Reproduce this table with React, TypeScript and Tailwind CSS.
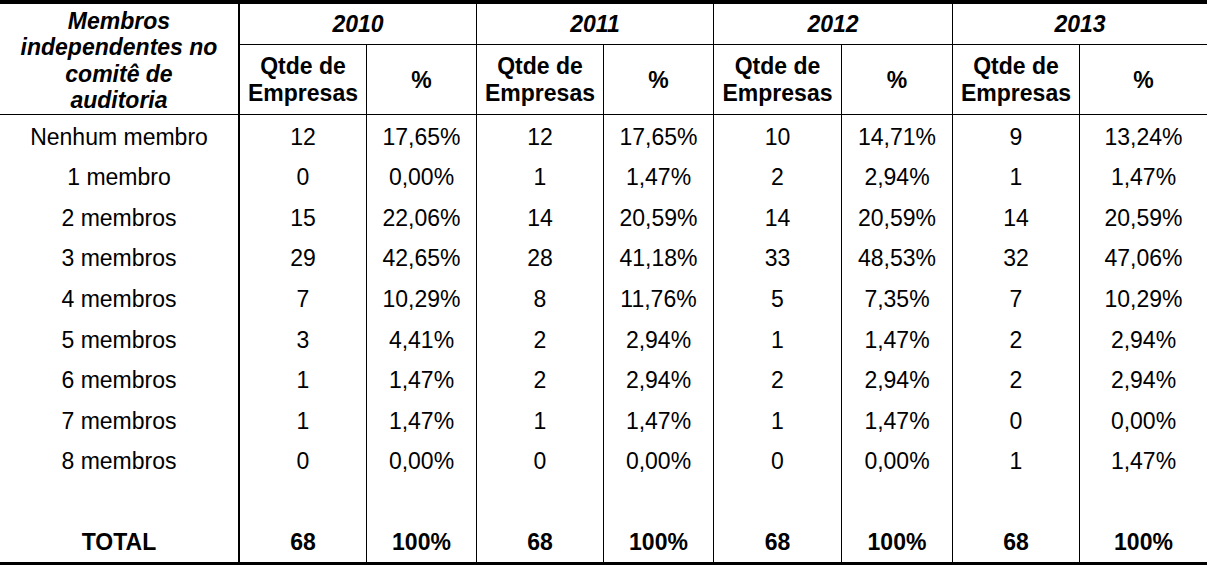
import React from "react";

const years = ["2010", "2011", "2012", "2013"];

const rows: [string, string[]][] = [
  ["Nenhum membro", ["12", "17,65%", "12", "17,65%", "10", "14,71%", "9", "13,24%"]],
  ["1 membro", ["0", "0,00%", "1", "1,47%", "2", "2,94%", "1", "1,47%"]],
  ["2 membros", ["15", "22,06%", "14", "20,59%", "14", "20,59%", "14", "20,59%"]],
  ["3 membros", ["29", "42,65%", "28", "41,18%", "33", "48,53%", "32", "47,06%"]],
  ["4 membros", ["7", "10,29%", "8", "11,76%", "5", "7,35%", "7", "10,29%"]],
  ["5 membros", ["3", "4,41%", "2", "2,94%", "1", "1,47%", "2", "2,94%"]],
  ["6 membros", ["1", "1,47%", "2", "2,94%", "2", "2,94%", "2", "2,94%"]],
  ["7 membros", ["1", "1,47%", "1", "1,47%", "1", "1,47%", "0", "0,00%"]],
  ["8 membros", ["0", "0,00%", "0", "0,00%", "0", "0,00%", "1", "1,47%"]],
];

const cellBorder = (i: number) =>
  i === 7 ? "" : "border-r border-black";

export default function App() {
  return (
    <div
      className="w-[1209px] h-[565px] bg-white text-black overflow-hidden"
      style={{ fontFamily: '"Liberation Sans", Arial, sans-serif' }}
    >
      <div className="w-[1207px] border-t-4 border-b-[3px] border-black">
        <div className="grid grid-cols-[240px_127px_110px_127px_110px_128px_111px_127px_127px] grid-rows-[41px_70px] text-[23px]">
          <div className="row-span-2 col-start-1 row-start-1 border-r-2 border-b border-black flex items-center justify-center text-center font-bold italic leading-[26.5px] pt-[3px]">
            <span>
              Membros
              <br />
              independentes no
              <br />
              comitê de
              <br />
              auditoria
            </span>
          </div>
          {years.map((y, i) => (
            <div
              key={y}
              className={`col-span-2 row-start-1 border-b border-black flex items-center justify-center font-bold italic ${i === 3 ? "" : "border-r"}`}
            >
              {y}
            </div>
          ))}
          {years.map((y, i) => (
            <React.Fragment key={"s" + y}>
              <div className="row-start-2 border-r border-b border-black flex items-center justify-center text-center font-bold leading-[27px] pt-[1px]">
                <span>
                  Qtde de
                  <br />
                  Empresas
                </span>
              </div>
              <div
                className={`row-start-2 border-b border-black flex items-center justify-center font-bold pt-[1px] ${i === 3 ? "" : "border-r"}`}
              >
                %
              </div>
            </React.Fragment>
          ))}
        </div>
        <div className="grid grid-cols-[240px_127px_110px_127px_110px_128px_111px_127px_127px] auto-rows-[40.6px] text-[23px]">
          {rows.map(([label, vals]) => (
            <React.Fragment key={label}>
              <div className="border-r-2 border-black flex items-center justify-center pt-[3px]">
                {label}
              </div>
              {vals.map((v, i) => (
                <div
                  key={i}
                  className={`${cellBorder(i)} flex items-center justify-center pt-[3px]`}
                >
                  {v}
                </div>
              ))}
            </React.Fragment>
          ))}
          <div className="border-r-2 border-black" />
          {Array.from({ length: 8 }).map((_, i) => (
            <div key={"b" + i} className={cellBorder(i)} />
          ))}
          <div className="border-r-2 border-black flex items-center justify-center font-bold pt-[3px]">
            TOTAL
          </div>
          {["68", "100%", "68", "100%", "68", "100%", "68", "100%"].map((v, i) => (
            <div
              key={"t" + i}
              className={`${cellBorder(i)} flex items-center justify-center font-bold pt-[3px]`}
            >
              {v}
            </div>
          ))}
        </div>
      </div>
    </div>
  );
}
